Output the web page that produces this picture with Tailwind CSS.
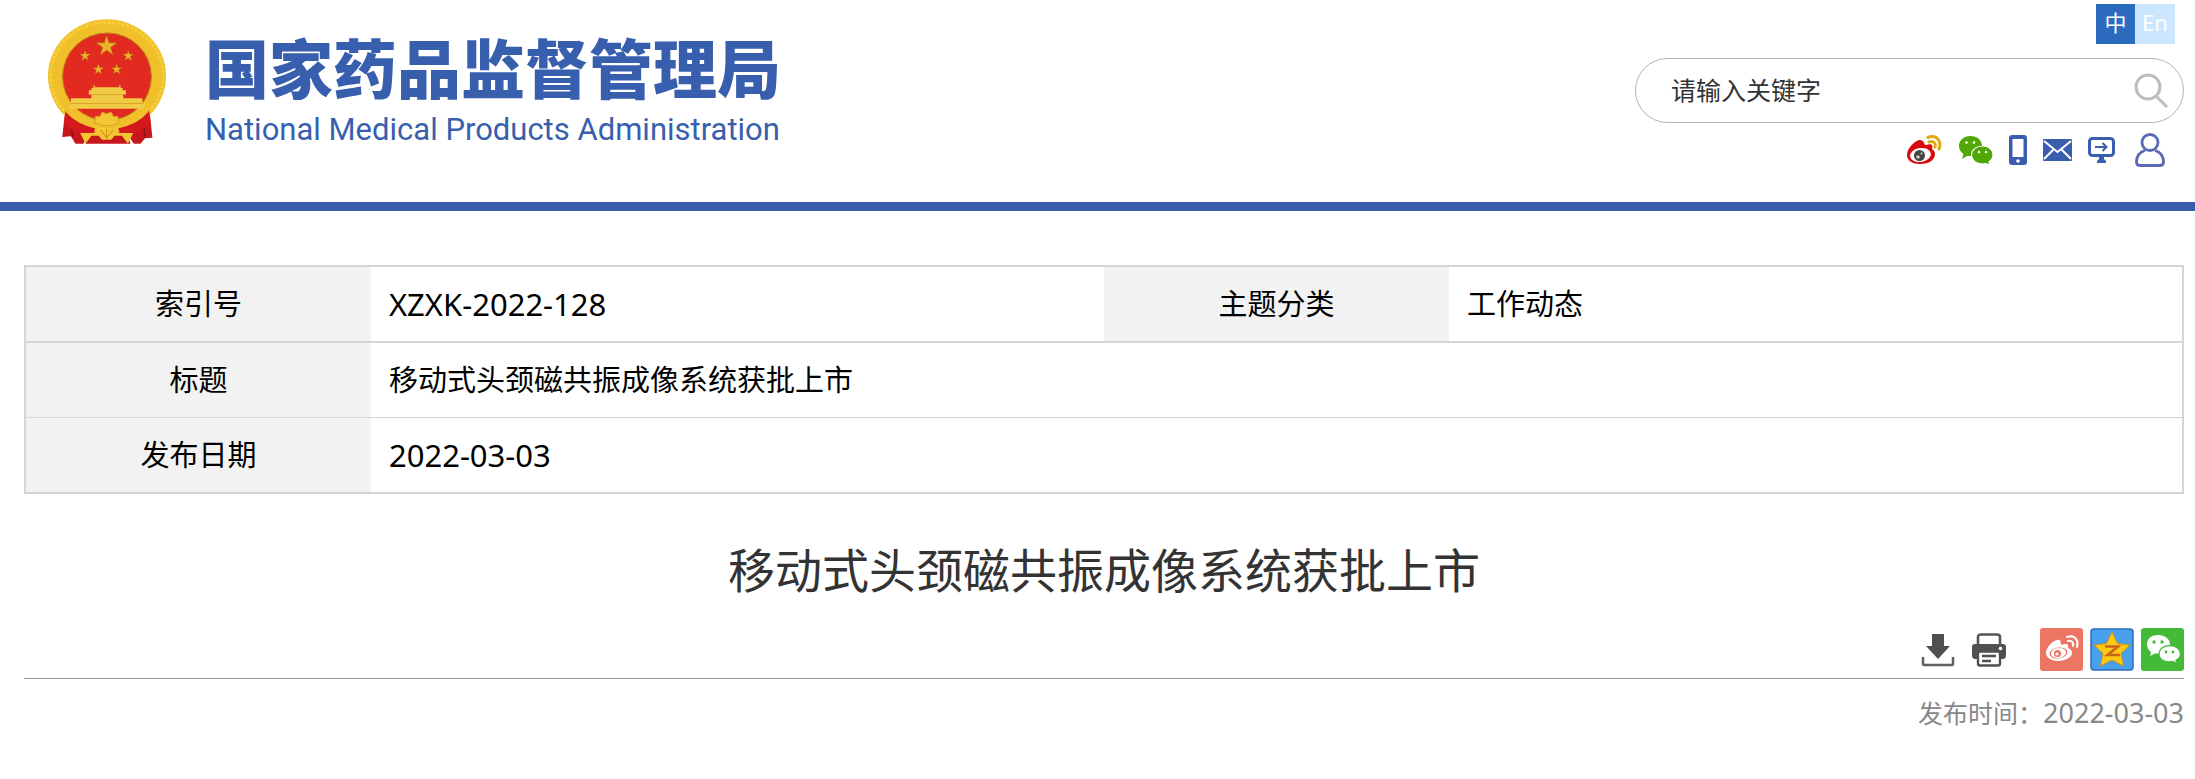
<!DOCTYPE html>
<html lang="zh-CN">
  <head>
    <meta charset="UTF-8" />
    <meta name="viewport" content="width=device-width, initial-scale=1.0" />
    <title>移动式头颈磁共振成像系统获批上市</title>
    <script src="https://cdn.jsdelivr.net/npm/@tailwindcss/browser@4"></script>
  </head>
  <body class="bg-white text-black font-['Noto_Sans','Noto_Sans_CJK_SC',sans-serif]">
    <svg class="hidden">
      <symbol id="star" viewBox="-10 -10 20 20">
        <path d="M0-10 2.2-3.1H9.5L3.6 1.2 5.9 8.1 0 3.8-5.9 8.1-3.6 1.2-9.5-3.1H-2.2Z" />
      </symbol>
    </svg>

    <header class="flex items-start justify-between border-b-[9px] border-[#395daa] pl-[47px] pr-[11px] pb-[34px]">
      <a href="#" class="flex items-start gap-[38px] pt-[18px] text-[#385fad]">
        <!-- national emblem -->
        <svg class="w-[120px] h-[128px]" viewBox="50 52 362 384">
          <path d="M106 320 96 410 122 408 136 430H160L174 402 166 430H302L294 404 312 430H332L346 414 368 412 358 318Z" fill="#c8161d" />
          <path d="M118 345 128 410M338 345 346 410" stroke="#8e1418" stroke-width="5" fill="none" />
          <ellipse cx="231" cy="226" rx="178" ry="171" fill="#f0c02a" />
          <ellipse cx="231" cy="226" rx="170" ry="162" fill="none" stroke="#f6d03c" stroke-width="9" stroke-dasharray="9 5" />
          <path d="M106 328Q140 372 196 384L186 404 160 398Q124 396 102 368ZM358 328Q322 372 264 384L276 404 302 398Q336 396 362 368Z" fill="#d4191e" />
          <path d="M98 318Q150 374 231 374T364 318L354 336Q320 376 262 382H200Q140 374 108 336Z" fill="#f0c02a" />
          <ellipse cx="231" cy="228" rx="134" ry="132" fill="#e32a20" stroke="#b9821a" stroke-width="3" />
          <g fill="#e9b32a" stroke="#b8611a" stroke-width=".5">
            <use href="#star" x="197" y="103" width="66" height="66" />
            <use href="#star" x="148" y="148" width="34" height="34" />
            <use href="#star" x="278" y="148" width="34" height="34" />
            <use href="#star" x="188" y="189" width="34" height="34" />
            <use href="#star" x="243" y="189" width="34" height="34" />
          </g>
          <path d="M190 254V262H184V269H176V282H184V293H122V306H116L119 325H342L348 306H338V293H280V282H288V269H278V262H272V254H268V260H194V254Z" fill="#f2cb45" />
          <path d="M184 282H280M120 309H342" stroke="#dda52a" stroke-width="3" />
          <path d="M194 368 196 348 210 348 216 335 230 340 244 335 250 348 264 348 266 368Q231 384 194 368Z" fill="#f3c733" stroke="#dd9e20" stroke-width="3" />
          <path d="M150 398H190L210 386H250L270 398H310L294 430 276 406H254L244 418H216L206 406H184L166 430Z" fill="#f1c631" />
          <path d="M212 389 230 412 250 389M230 386V416" stroke="#cf851c" stroke-width="3" fill="none" />
        </svg>
        <span class="flex flex-col">
          <span class="text-[64px] leading-[94px] font-black font-['Noto_Sans_CJK_SC',sans-serif]">国家药品监督管理局</span>
          <span class="text-[31px] leading-9 font-[Roboto,sans-serif]">National Medical Products Administration</span>
        </span>
      </a>

      <div class="flex flex-col items-end w-[549px]">
        <nav class="flex mt-1 mr-[9px] text-[22px] leading-9 text-white">
          <a href="#" class="w-[39px] h-10 bg-[#2d6bbf] text-center">中</a>
          <a href="#" class="w-10 h-10 bg-[#cce6ff] text-center">En</a>
        </nav>
        <form class="flex items-center justify-between w-full h-[65px] mt-3.5 pl-[35px] pr-3.5 border border-[#b3b3b3] rounded-full">
          <input type="text" aria-label="请输入关键字" placeholder="请输入关键字" class="flex-1 min-w-0 text-[25px] outline-none placeholder:text-[#333]" />
          <button type="submit" aria-label="搜索">
            <svg class="w-9 h-9" viewBox="0 0 36 36" fill="none" stroke="#bdbdbd" stroke-width="3">
              <circle cx="15" cy="14" r="12" />
              <path d="M23 23 34 34" />
            </svg>
          </button>
        </form>
        <nav class="flex items-center h-9 mt-[9px] mr-[19px] gap-4">
          <a href="#" aria-label="微博">
            <svg class="w-9 h-[30px]" viewBox="0 0 36 30">
              <path d="M13 5C9 6 1 13 1 20 1 26 7 29 14 29 23 29 29 25 29 19 29 16 27 15 26 14 27 10 26 8 20 10 18 10 18 4 13 5Z" fill="#d9090d" />
              <ellipse cx="14.500" cy="20" rx="10.500" ry="7" fill="#fff" transform="rotate(-8 14.500 20)" />
              <circle cx="13.500" cy="20.500" r="5.500" fill="#444" />
              <circle cx="12" cy="22" r="1.800" fill="#ccc" />
              <circle cx="15.500" cy="18.500" r="1" fill="#ddd" />
              <path d="M22 2.500C31-1 36 7 33 14M23 7C28 5 30 9 29 12" fill="none" stroke="#e0a910" stroke-width="3" stroke-linecap="round" />
            </svg>
          </a>
          <a href="#" aria-label="微信">
            <svg class="w-[35px] h-[30px]" viewBox="0 0 35 30">
              <path d="M12.500 1C5.500 1 1 5.500 1 11 1 14.500 3 17.500 5.500 19L4 24 9 21 15 21C22 20 24 16 24 11 24 5 19 1 12.500 1Z" fill="#50a706" />
              <path d="M24.500 11C18 11 13.500 15 13.500 20 13.500 25 18 29 24.500 29L28 28.500 32 30 31 27C33 25.500 35 23 35 20 35 15 31 11 24.500 11Z" fill="#50a706" stroke="#fff" stroke-width="1.200" />
              <g fill="#fff"><circle cx="8.500" cy="7.500" r="1.300" /><circle cx="16" cy="7.500" r="1.300" /><circle cx="21" cy="17" r="1.200" /><circle cx="28" cy="17" r="1.200" /></g>
            </svg>
          </a>
          <a href="#" aria-label="手机版">
            <svg class="w-[18px] h-[30px]" viewBox="0 0 18 30">
              <rect width="18" height="30" rx="3" fill="#3a5ead" />
              <path d="M3.500 4H14.500V22H3.500Z" fill="#fff" />
              <circle cx="9" cy="26" r="1.800" fill="#fff" />
            </svg>
          </a>
          <a href="#" aria-label="邮箱">
            <svg class="w-[29px] h-[22px]" viewBox="0 0 29 22">
              <rect width="29" height="22" rx="1" fill="#3a5ead" />
              <path d="M1 2 14.500 13 28 2M1 20 10.500 10.500M28 20 18.500 10.500" fill="none" stroke="#fff" stroke-width="2" />
            </svg>
          </a>
          <a href="#" aria-label="客户端">
            <svg class="w-[27px] h-[27px]" viewBox="0 0 27 27">
              <rect x="1.500" y="1.500" width="24" height="17" rx="3" fill="none" stroke="#3a5ead" stroke-width="3" />
              <path d="M11 19H16V22L18 24V26H9V24L11 22Z" fill="#3a5ead" />
              <path d="M7 10H18M14.500 6 18.500 10 14.500 14" fill="none" stroke="#3a5ead" stroke-width="2" />
            </svg>
          </a>
          <a href="#" aria-label="个人中心" class="ml-1">
            <svg class="w-[30px] h-[34px]" viewBox="0 0 30 34" fill="none" stroke="#5a6ab5" stroke-width="2.800">
              <circle cx="15" cy="9.500" r="8" />
              <path d="M10 17.500C5 19 1.500 23 1.500 29 1.500 31.500 2.500 32.500 5 32.500H25C27.500 32.500 28.500 31.500 28.500 29 28.500 23 25 19 20 17.500" />
            </svg>
          </a>
        </nav>
      </div>
    </header>

    <main class="pl-6 pr-[11px] pt-[54px]">
      <table class="w-full table-fixed border-2 border-[#d5d5d5] border-separate border-spacing-0 text-[29px] leading-10 text-left">
        <colgroup>
          <col class="w-[16%]" />
          <col class="w-[34%]" />
          <col class="w-[16%]" />
          <col class="w-[34%]" />
        </colgroup>
        <tbody>
          <tr>
            <th scope="row" class="h-[76px] bg-[#f2f2f2] border-b-2 border-[#d5d5d5] font-normal text-center">索引号</th>
            <td class="border-b-2 border-[#d5d5d5] pl-[18px] text-[31px]">XZXK-2022-128</td>
            <th scope="row" class="bg-[#f2f2f2] border-b-2 border-[#d5d5d5] font-normal text-center">主题分类</th>
            <td class="border-b-2 border-[#d5d5d5] pl-[18px]">工作动态</td>
          </tr>
          <tr>
            <th scope="row" class="h-[75px] bg-[#f2f2f2] border-b border-[#d5d5d5] font-normal text-center">标题</th>
            <td colspan="3" class="border-b border-[#d5d5d5] pl-[18px]">移动式头颈磁共振成像系统获批上市</td>
          </tr>
          <tr>
            <th scope="row" class="h-[74px] bg-[#f2f2f2] font-normal text-center">发布日期</th>
            <td colspan="3" class="pl-[18px] text-[31px]">2022-03-03</td>
          </tr>
        </tbody>
      </table>

      <h1 class="mt-10 text-[47px] leading-[72px] text-center text-[#333]">移动式头颈磁共振成像系统获批上市</h1>

      <div class="flex items-center justify-end mt-[22px] pb-[7px] border-b border-[#999]">
        <button type="button" aria-label="下载" class="mr-4">
          <svg class="w-[34px] h-[34px]" viewBox="0 0 34 34">
            <path d="M11 1H23V13H29L17 26 5 13H11Z" fill="#505050" />
            <path d="M2 24V31Q2 32 3 32H31Q32 32 32 31V24" fill="none" stroke="#606060" stroke-width="2.500" />
          </svg>
        </button>
        <button type="button" aria-label="打印" class="mr-[33px]">
          <svg class="w-9 h-[34px]" viewBox="0 0 36 34">
            <path d="M7 11V4Q7 1.500 10 1.500H26Q29 1.500 29 4V11" fill="none" stroke="#555" stroke-width="2.600" />
            <path d="M4 11H32Q35 11 35 14V22Q35 26 32 26H4Q1 26 1 22V14Q1 11 4 11Z" fill="#505050" />
            <rect x="7" y="18.500" width="22" height="14" rx="2" fill="#fff" stroke="#505050" stroke-width="2.400" />
            <path d="M11 23H25M11 28H20" stroke="#505050" stroke-width="2.400" />
            <circle cx="29.500" cy="15.500" r="1.800" fill="#fff" />
          </svg>
        </button>
        <div class="flex gap-[7px]">
          <a href="#" aria-label="分享到微博">
            <svg class="w-[43px] h-[43px]" viewBox="0 0 43 43">
              <rect width="43" height="43" rx="3" fill="#ec7564" />
              <path d="M17 12C12 13 6 20 6 25 6 30 12 33 18 33 26 33 32 29 32 25 32 22 30 21 28 20 29 16 27 15 21 17 21 13 20 11 17 12Z" fill="#fff" />
              <ellipse cx="18.500" cy="25" rx="9" ry="5.500" fill="#ec7564" transform="rotate(-8 18.500 25)" />
              <ellipse cx="18.500" cy="25" rx="7.500" ry="5" fill="#fff" transform="rotate(-8 18.500 25)" />
              <circle cx="17.500" cy="25.500" r="3.600" fill="#ec7564" />
              <circle cx="17" cy="26" r="1.600" fill="#fff" />
              <path d="M27 9C34 6 39 12 37 19M28 13C32 12 34 15 33 18" fill="none" stroke="#fff" stroke-width="2" stroke-linecap="round" />
            </svg>
          </a>
          <a href="#" aria-label="分享到QQ空间">
            <svg class="w-11 h-[43px]" viewBox="0 0 44 43">
              <rect x="1" y="1" width="42" height="41" rx="3" fill="#49a1ee" stroke="#2b6cc0" stroke-width="1.500" />
              <path d="M22 4 27.500 15.500 40 17 31 25.500 33.500 38 22 32 10.500 38 13 25.500 4 17 16.500 15.500Z" fill="#fbcb16" stroke="#cf8f10" stroke-width="1" stroke-linejoin="round" />
              <path d="M15 18.500H28L17.500 27H30" fill="none" stroke="#c8661a" stroke-width="2.600" />
            </svg>
          </a>
          <a href="#" aria-label="分享到微信">
            <svg class="w-[43px] h-[43px]" viewBox="0 0 43 43">
              <rect width="43" height="43" rx="3" fill="#43bb39" />
              <path d="M17 7C10 7 6 11 6 16.500 6 20 8 22.500 10 24L9 28 14 25.500H19C25 25 29 21 29 16.500 29 11 24 7 17 7Z" fill="#fff" />
              <path d="M29 17.500C22 17.500 18 21.500 18 26 18 31 22.500 34 28 34L32 33.500 36 36 35 32C37.500 31 39.500 28.500 39.500 26 39.500 21 35 17.500 29 17.500Z" fill="#fff" stroke="#43bb39" stroke-width="1.300" />
              <g fill="#43bb39"><circle cx="13" cy="14" r="1.700" /><circle cx="21" cy="14" r="1.700" /><circle cx="25" cy="24" r="1.400" /><circle cx="32" cy="24" r="1.400" /></g>
            </svg>
          </a>
        </div>
      </div>

      <p class="mt-4 text-right text-[25px] leading-9 text-[#888]">发布时间：<time datetime="2022-03-03" class="text-[27px]">2022-03-03</time></p>
    </main>
  </body>
</html>
